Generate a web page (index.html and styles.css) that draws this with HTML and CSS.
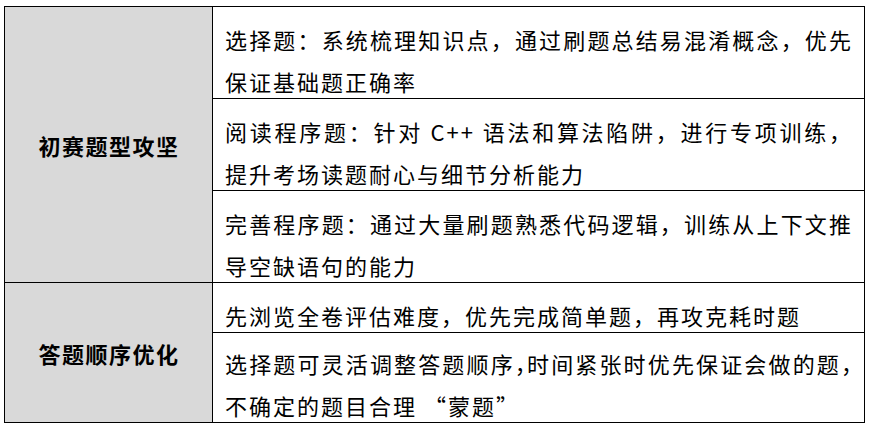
FILE: index.html
```html
<!DOCTYPE html>
<html lang="zh-CN">
<head>
<meta charset="utf-8">
<title>答题策略</title>
<link rel="stylesheet" href="styles.css">
</head>
<body>
<div class="tbl">
  <div class="head h1">初赛题型攻坚</div>
  <div class="cell"><p><span class="ln">选择题：系统梳理知识点，通过刷题总结易混淆概念，优先</span>保证基础题正确率</p></div>
  <div class="cell"><p><span class="ln">阅读程序题：针对 C++ 语法和算法陷阱，进行专项训练，</span>提升考场读题耐心与细节分析能力</p></div>
  <div class="cell"><p><span class="ln">完善程序题：通过大量刷题熟悉代码逻辑，训练从上下文推</span>导空缺语句的能力</p></div>
  <div class="head h2">答题顺序优化</div>
  <div class="cell"><p>先浏览全卷评估难度，优先完成简单题，再攻克耗时题</p></div>
  <div class="cell last"><p><span class="ln">选择题可灵活调整答题顺序<span class="half">，</span>时间紧张时优先保证会做的题<span class="half">，</span></span>不确定的题目合理 “蒙题”</p></div>
</div>
</body>
</html>
```

FILE: styles.css
```css
html, body {
  background: #ffffff;
}
body {
  margin: 6px 0 0 4px;
  font-family: "Noto Sans CJK SC", sans-serif;
  color: #000;
}
.tbl {
  display: grid;
  grid-template-columns: 207px 651px;
  gap: 1px;
  padding: 1px;
  background: #000;
  width: fit-content;
}
.head {
  background: #d9d9d9;
  display: flex;
  align-items: center;
  justify-content: center;
  font-size: 22px;
  font-weight: bold;
  letter-spacing: 1.5px;
  padding-left: 1px;
}
.h1 {
  grid-column: 1;
  grid-row: 1 / 4;
}
.h2 {
  grid-column: 1;
  grid-row: 4 / 6;
}
.cell {
  grid-column: 2;
  background: #fff;
  padding: 11px 11px 0 12px;
}
.cell.last {
  padding-top: 9px;
}
.cell p {
  margin: 0 0 -4px 0;
  font-size: 22px;
  line-height: 42px;
  letter-spacing: 2px;
}
.ln {
  display: block;
  text-align: justify;
  text-align-last: justify;
}
.half {
  letter-spacing: -10px;
}
```
